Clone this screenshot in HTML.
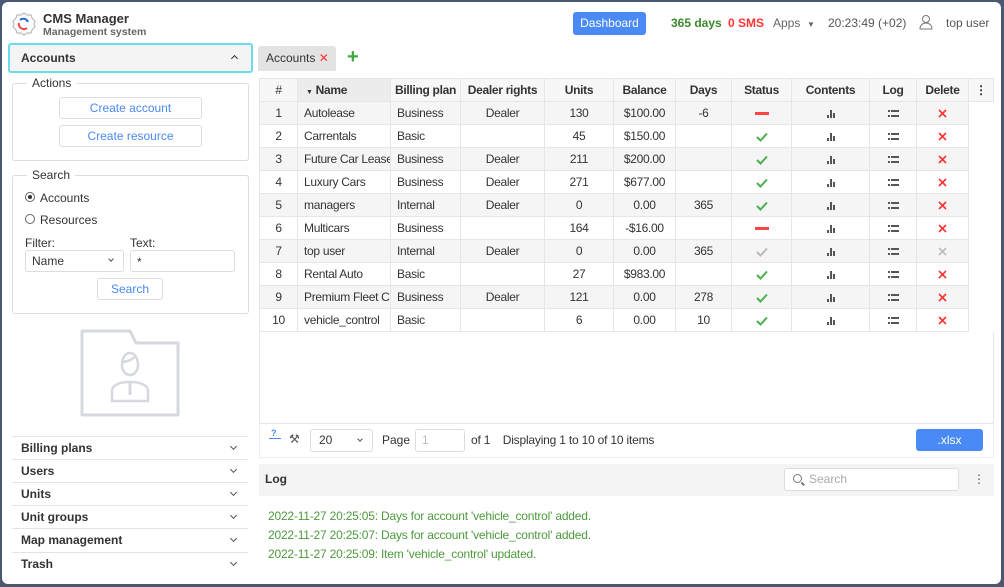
<!DOCTYPE html>
<html><head><meta charset="utf-8"><style>
*{box-sizing:border-box;margin:0;padding:0}
body{width:1004px;height:587px;background:#4a5870;font-family:"Liberation Sans",sans-serif;font-size:12px;color:#333;overflow:hidden;position:relative}
.frame{position:absolute;left:2px;top:2px;width:999px;height:582px;background:#fff;border-radius:6px;overflow:hidden}
.abs{position:absolute}
.btn{position:absolute;border:1px solid #ddd;border-radius:3px;background:#fff;color:#4a8af4;text-align:center;line-height:20px}
fieldset{position:absolute;border:1px solid #ddd;border-radius:3px}
legend{margin-left:14px;padding:0 5px;font-size:12px;color:#333}
table{border-collapse:collapse;position:absolute;left:257px;top:76px;table-layout:fixed;width:734px}
td,th{height:23px;border:1px solid #e6e6e6;text-align:center;font-size:12px;white-space:nowrap;overflow:hidden;padding:0;letter-spacing:-0.3px}
th{font-weight:bold;background:#f7f7f7;color:#333}
td.l{text-align:left;padding-left:6px}
tr:nth-child(odd) td{background:#f5f5f5}
td.e{border:none!important;background:#fff!important}
.acc{position:absolute;left:10px;width:236px;height:23px;border-top:1px solid #e3e3e3;line-height:22px;padding-left:9px;font-weight:bold;color:#333}
.acc:after{content:"";position:absolute;right:12px;top:7px;width:4px;height:4px;border-right:1.5px solid #555;border-bottom:1.5px solid #555;transform:rotate(45deg)}
.log{position:absolute;left:266px;color:#4c9a3c;font-size:12px;letter-spacing:-0.2px}
svg{vertical-align:middle}
</style></head><body><div class="frame">
<svg class="abs" style="left:9px;top:9px" width="26" height="26" viewBox="0 0 26 26"><path d="M13 2l3 2 4 0 1 3 3 3-1 3 1 3-3 3-1 3-4 0-3 2-3-2-4 0-1-3-3-3 1-3-1-3 3-3 1-3 4 0z" fill="none" stroke="#bbb" stroke-width="1.2"/><path d="M8 12a5 5 0 0 0 8 5" stroke="#e44" stroke-width="2" fill="none"/><path d="M9 9a5 5 0 0 1 8 2" stroke="#2a6ad4" stroke-width="2" fill="none"/></svg>
<div class="abs" style="left:41px;top:9px;font-weight:bold;font-size:13px;color:#333">CMS Manager</div>
<div class="abs" style="left:41px;top:24px;font-size:10.5px;color:#666;font-weight:bold">Management system</div>
<div class="abs" style="left:571px;top:10px;width:73px;height:23px;background:#4a8af4;border-radius:3px;color:#fff;text-align:center;line-height:23px">Dashboard</div>
<div class="abs" style="left:669px;top:14px;color:#3a8a2a;font-weight:bold">365 days</div>
<div class="abs" style="left:726px;top:14px;color:#f33;font-weight:bold">0 SMS</div>
<div class="abs" style="left:771px;top:14px;color:#666">Apps &nbsp;<span style="font-size:8px">▼</span></div>
<div class="abs" style="left:826px;top:14px;color:#555">20:23:49 (+02)</div>
<svg class="abs" style="left:917px;top:12px" width="14" height="16" viewBox="0 0 14 16"><circle cx="7" cy="5" r="3.5" fill="none" stroke="#777"/><path d="M1 15c0-4 3-6 6-6s6 2 6 6z" fill="none" stroke="#777"/></svg>
<div class="abs" style="left:944px;top:14px;color:#555">top user</div>

<div class="abs" style="left:6px;top:41px;width:245px;height:30px;border:2px solid #6adcec;border-radius:3px;background:#f4f4f4;padding-left:11px;line-height:26px;font-weight:bold">Accounts<span style="position:absolute;right:14px;top:11px;width:5px;height:5px;border-left:1.5px solid #333;border-top:1.5px solid #333;transform:rotate(45deg)"></span></div>
<fieldset style="left:10px;top:74px;width:237px;height:85px"><legend>Actions</legend></fieldset>
<div class="btn" style="left:57px;top:95px;width:143px;height:22px">Create account</div>
<div class="btn" style="left:57px;top:123px;width:143px;height:22px">Create resource</div>
<fieldset style="left:10px;top:166px;width:237px;height:146px"><legend>Search</legend></fieldset>
<div class="abs" style="left:23px;top:190px;width:10px;height:10px;border-radius:50%;border:1px solid #666"><div style="margin:2px;width:4px;height:4px;border-radius:50%;background:#333"></div></div>
<div class="abs" style="left:38px;top:189px">Accounts</div>
<div class="abs" style="left:23px;top:212px;width:10px;height:10px;border-radius:50%;border:1px solid #666"></div>
<div class="abs" style="left:38px;top:211px">Resources</div>
<div class="abs" style="left:23px;top:234px">Filter:</div>
<div class="abs" style="left:128px;top:234px">Text:</div>
<div class="abs" style="left:23px;top:248px;width:99px;height:22px;border:1px solid #ddd;border-radius:3px;padding-left:6px;line-height:20px">Name<span style="position:absolute;right:10px;top:6px;width:4px;height:4px;border-right:1.5px solid #555;border-bottom:1.5px solid #555;transform:rotate(45deg)"></span></div>
<div class="abs" style="left:128px;top:248px;width:105px;height:22px;border:1px solid #ddd;border-radius:3px;padding-left:6px;line-height:22px">*</div>
<div class="btn" style="left:95px;top:276px;width:66px;height:22px">Search</div>
<svg class="abs" style="left:78px;top:327px" width="102" height="90" viewBox="0 0 102 90"><path d="M2 2h48l6 12h42v72H2z" fill="none" stroke="#d5d8de" stroke-width="3" stroke-linejoin="round"/><path d="M42 36c0-8 4-12 8-12s8 4 8 12c0 6-4 10-8 10s-8-4-8-10z" fill="none" stroke="#d5d8de" stroke-width="2.5"/><path d="M42 33c4 0 10-2 14-6" fill="none" stroke="#d5d8de" stroke-width="2.5"/><path d="M32 72v-10c0-6 8-9 18-9s18 3 18 9v10z" fill="none" stroke="#d5d8de" stroke-width="2.5"/><path d="M50 54v12" stroke="#d5d8de" stroke-width="3"/></svg>
<div class="acc" style="top:434px">Billing plans</div>
<div class="acc" style="top:457px">Users</div>
<div class="acc" style="top:480px">Units</div>
<div class="acc" style="top:503px">Unit groups</div>
<div class="acc" style="top:526px">Map management</div>
<div class="acc" style="top:550px">Trash</div>

<div class="abs" style="left:256px;top:44px;width:78px;height:25px;background:#e3e3e3;border-radius:3px 3px 0 0;padding-left:8px;line-height:25px">Accounts <span style="color:#f33;font-size:12px">✕</span></div>
<div class="abs" style="left:345px;top:44px;color:#3aaa3a;font-size:20px;font-weight:bold;line-height:22px">+</div>

<div class="abs" style="left:257px;top:76px;width:735px;height:346px;border:1px solid #e6e6e6;border-radius:3px"></div>
<svg width="0" height="0" style="position:absolute"><defs>
<g id="bar"><rect x="0" y="6" width="2" height="3" fill="#555"/><rect x="3" y="1" width="2" height="8" fill="#555"/><rect x="6" y="4" width="2" height="5" fill="#555"/></g>
<g id="lst"><rect x="0" y="1" width="2" height="2" fill="#555"/><rect x="3" y="1" width="8" height="2" fill="#555"/><rect x="0" y="6" width="2" height="2" fill="#555"/><rect x="3" y="6" width="8" height="2" fill="#555"/></g>
</defs></svg>
<table>
<colgroup><col style="width:38px"><col style="width:93px"><col style="width:70px"><col style="width:84px"><col style="width:69px"><col style="width:62px"><col style="width:56px"><col style="width:60px"><col style="width:78px"><col style="width:47px"><col style="width:52px"><col style="width:25px"></colgroup>
<tr><th style="font-weight:normal">#</th><th style="background:#ececec;text-align:left;padding-left:8px"><span style="font-size:7px">▼</span> Name</th><th>Billing plan</th><th>Dealer rights</th><th>Units</th><th>Balance</th><th>Days</th><th>Status</th><th>Contents</th><th>Log</th><th>Delete</th><th>⋮</th></tr>
</table>
<script>
var d=[["1","Autolease","Business","Dealer","130","$100.00","-6",0],["2","Carrentals","Basic","","45","$150.00","",1],["3","Future Car Lease","Business","Dealer","211","$200.00","",1],["4","Luxury Cars","Business","Dealer","271","$677.00","",1],["5","managers","Internal","Dealer","0","0.00","365",1],["6","Multicars","Business","","164","-$16.00","",0],["7","top user","Internal","Dealer","0","0.00","365",2],["8","Rental Auto","Basic","","27","$983.00","",1],["9","Premium Fleet Co","Business","Dealer","121","0.00","278",1],["10","vehicle_control","Basic","","6","0.00","10",1]];
var t=document.querySelector("table"),h="";
d.forEach(function(r){var st=r[7]==0?'<span style="display:inline-block;width:14px;height:3px;background:#f44;vertical-align:middle"></span>':'<svg width="12" height="10" viewBox="0 0 12 10"><path d="M1 5l3.5 3.5L11 1.5" fill="none" stroke="'+(r[7]==2?'#bbb':'#4caf50')+'" stroke-width="2"/></svg>';
var xc=r[7]==2?'#bbb':'#f33';
h+='<tr><td>'+r[0]+'</td><td class="l">'+r[1]+'</td><td class="l">'+r[2]+'</td><td>'+r[3]+'</td><td>'+r[4]+'</td><td>'+r[5]+'</td><td>'+r[6]+'</td><td>'+st+'</td><td><svg width="8" height="9"><use href="#bar"/></svg></td><td><svg width="11" height="9"><use href="#lst"/></svg></td><td><svg width="9" height="9" viewBox="0 0 9 9"><path d="M1 1l7 7M8 1L1 8" stroke="'+xc+'" stroke-width="1.6"/></svg></td><td class="e"></td></tr>';});
t.insertAdjacentHTML("beforeend",h);
</script>
<div class="abs" style="left:257px;top:421px;width:735px;height:35px;border:1px solid #eee;border-top:1px solid #e6e6e6"></div>
<div class="abs" style="left:269px;top:426px;color:#4a8af4;font-size:9px;font-weight:bold">?</div>
<div class="abs" style="left:267px;top:436px;width:12px;height:1px;background:#4a8af4"></div>
<div class="abs" style="left:287px;top:430px;color:#555">⚒</div>
<div class="abs" style="left:308px;top:427px;width:63px;height:23px;border:1px solid #ddd;border-radius:3px;padding-left:8px;line-height:21px">20<span style="position:absolute;right:10px;top:7px;width:4px;height:4px;border-right:1.5px solid #555;border-bottom:1.5px solid #555;transform:rotate(45deg)"></span></div>
<div class="abs" style="left:380px;top:431px">Page</div>
<div class="abs" style="left:413px;top:427px;width:50px;height:23px;border:1px solid #ddd;border-radius:3px;padding-left:6px;line-height:21px;color:#bbb">1</div>
<div class="abs" style="left:469px;top:431px;letter-spacing:-0.2px">of 1 &nbsp;&nbsp; Displaying 1 to 10 of 10 items</div>
<div class="abs" style="left:914px;top:427px;width:67px;height:22px;background:#4a8af4;border-radius:3px;color:#fff;text-align:center;line-height:22px">.xlsx</div>
<div class="abs" style="left:257px;top:462px;width:735px;height:32px;background:#f4f4f4"></div>
<div class="abs" style="left:263px;top:470px;font-weight:bold">Log</div>
<div class="abs" style="left:782px;top:466px;width:175px;height:23px;border:1px solid #ddd;border-radius:3px;background:#fff;padding-left:24px;line-height:21px;color:#aaa">Search<span style="position:absolute;left:8px;top:5px;width:9px;height:9px;border:1.5px solid #777;border-radius:50%"></span><span style="position:absolute;left:16px;top:14px;width:4px;height:1.5px;background:#777;transform:rotate(45deg)"></span></div>
<div class="abs" style="left:971px;top:470px;color:#555">⋮</div>
<div class="log" style="top:507px">2022-11-27 20:25:05: Days for account 'vehicle_control' added.</div>
<div class="log" style="top:526px">2022-11-27 20:25:07: Days for account 'vehicle_control' added.</div>
<div class="log" style="top:545px">2022-11-27 20:25:09: Item 'vehicle_control' updated.</div>
</div></body></html>
